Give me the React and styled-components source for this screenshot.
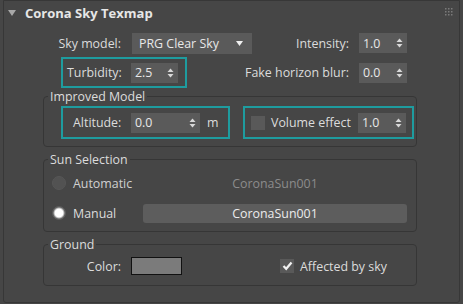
import React from 'react';
import styled, { createGlobalStyle } from 'styled-components';

const Global = createGlobalStyle`
  html, body {
    margin: 0;
    padding: 0;
    background: #464646;
  }
  body {
    font-family: "Open Sans", "Noto Sans", sans-serif;
    font-size: 12.4px;
    color: #dcdcdc;
  }
`

const Panel = styled.div`
  box-sizing: border-box;
  margin: 0 3px;
  height: 303px;
  border: 1px solid #373737;
  border-radius: 0 0 3px 3px;
  display: flex;
  flex-direction: column;
`

const Header = styled.div`
  height: 24px;
  display: flex;
  align-items: center;
  padding-left: 4px;
  position: relative;
`

const Title = styled.span`
  font-weight: 700;
  font-size: 13px;
  color: #e6e6e6;
  margin-left: 9px;
`

const Grip = styled.svg`
  position: absolute;
  right: 5px;
  top: 7px;
`

const Row = styled.div`
  display: flex;
  align-items: center;
  height: ${p => p.h || 22}px;
  margin-top: ${p => p.mt || 0}px;
`

const Left = styled.div`
  display: flex;
  align-items: center;
  flex: 1;
  min-width: 0;
`

const Right = styled.div`
  flex: none;
  display: flex;
  align-items: center;
  padding-right: 52px;
  gap: 10px;
  white-space: nowrap;
`

const Label = styled.span`
  display: inline-block;
  width: ${p => p.w}px;
  text-align: ${p => p.align || 'right'};
  white-space: nowrap;
  flex: none;
  margin-right: ${p => p.mr || 0}px;
  color: ${p => p.dim ? '#8c8c8c' : '#dcdcdc'};
`

const Highlight = styled.div`
  box-sizing: border-box;
  border: 2px solid #1e9c9f;
  display: flex;
  align-items: center;
  width: ${p => p.w}px;
  height: ${p => p.h}px;
  margin-left: ${p => p.ml || 0}px;
  padding-left: ${p => p.pl || 0}px;
  flex: none;
`

const Combo = styled.div`
  box-sizing: border-box;
  width: 120px;
  height: 21px;
  background: #5a5a5a;
  display: flex;
  align-items: center;
  justify-content: space-between;
  padding: 0 9px 0 7px;
  color: #e8e8e8;
  flex: none;
`

const SpinBox = styled.div`
  box-sizing: border-box;
  width: ${p => p.w || 48}px;
  height: 20px;
  background: #5a5a5a;
  display: flex;
  align-items: center;
  justify-content: space-between;
  padding: 0 4px 0 4px;
  color: #e8e8e8;
  flex: none;
`

const Group = styled.fieldset`
  margin: ${p => p.mt || 0}px 42px 0 39px;
  padding: 0 0 ${p => p.pb || 0}px 0;
  border: 1px solid #363636;
  border-radius: 4px;
  min-width: 0;
`

const Legend = styled.legend`
  padding: 0 2px;
  margin-left: 4px;
  line-height: 13px;
  color: #dcdcdc;
`

const Radio = styled.span`
  box-sizing: border-box;
  width: 14px;
  height: 14px;
  border-radius: 50%;
  flex: none;
  margin: 0 7px 0 8px;
  background: ${p => p.on
    ? 'radial-gradient(circle, #ffffff 0 4px, #d6d6d6 4.5px, #676767 6px)'
    : '#525252'};
  border: 1px solid ${p => p.on ? '#5e5e5e' : '#575757'};
`

const SunCell = styled.div`
  width: 264px;
  height: 19px;
  display: flex;
  align-items: center;
  justify-content: center;
  border-radius: 3px;
  background: ${p => p.button ? '#5d5d5d' : 'transparent'};
  color: ${p => p.button ? '#ececec' : '#8c8c8c'};
`

const RadioLabel = styled.div`
  width: 99px;
  display: flex;
  align-items: center;
  flex: none;
  color: ${p => p.dim ? '#d0d0d0' : '#dcdcdc'};
`

const Check = styled.span`
  box-sizing: border-box;
  width: 14px;
  height: 14px;
  background: #595959;
  flex: none;
  display: flex;
  align-items: center;
  justify-content: center;
  margin: 0 6px 0 ${p => p.ml || 0}px;
`

const Swatch = styled.span`
  box-sizing: border-box;
  width: 51px;
  height: 18px;
  border: 1px solid #111;
  background: #7b7b7b;
  flex: none;
`

const Unit = styled.span`
  margin-left: 7px;
`

const Arrows = () => (
  <svg width="7" height="10" viewBox="0 0 7 10">
    <path d="M3.5 0.5 L6.5 4 L0.5 4 Z" fill="#d8d8d8" />
    <path d="M0.5 6 L6.5 6 L3.5 9.5 Z" fill="#d8d8d8" />
  </svg>
)

const Spinner = ({ value, w }) => (
  <SpinBox w={w}>
    <span>{value}</span>
    <Arrows />
  </SpinBox>
)

const Tick = () => (
  <svg width="11" height="10" viewBox="0 0 11 10">
    <path d="M1.5 5 L4.2 7.8 L9.5 1.5" stroke="#f2f2f2" strokeWidth="2.2" fill="none" />
  </svg>
)

export default function App() {
  return (
    <>
      <Global />
      <Panel>
        <Header>
          <svg width="8" height="6" viewBox="0 0 8 6">
            <path d="M0 0 L8 0 L4 6 Z" fill="#a8a8a8" />
          </svg>
          <Title>Corona Sky Texmap</Title>
          <Grip width="9" height="9" viewBox="0 0 9 9">
            {[0, 3, 6].map(x => [0, 3, 6].map(y => (
              <rect key={x + '-' + y} x={x} y={y} width="1.5" height="1.5" fill="#7a7a7a" />
            )))}
          </Grip>
        </Header>

        <Row mt={7}>
          <Left>
            <Label w={117} mr={11}>Sky model:</Label>
            <Combo>
              <span>PRG Clear Sky</span>
              <svg width="7" height="5" viewBox="0 0 7 5">
                <path d="M0 0 L7 0 L3.5 5 Z" fill="#f0f0f0" />
              </svg>
            </Combo>
          </Left>
          <Right>
            <span>Intensity:</span>
            <Spinner value="1.0" />
          </Right>
        </Row>

        <Row mt={3} h={31}>
          <Left>
            <Highlight w={126} h={31} ml={57} pl={4}>
              <Label w={54} mr={10}>Turbidity:</Label>
              <Spinner value="2.5" w={47} />
            </Highlight>
          </Left>
          <Right>
            <span>Fake horizon blur:</span>
            <Spinner value="0.0" />
          </Right>
        </Row>

        <Group mt={2} pb={7}>
          <Legend>Improved Model</Legend>
          <Row h={33} mt={3}>
            <Highlight w={169} h={33} ml={17} pl={10}>
              <Label w={48} mr={10}>Altitude:</Label>
              <Spinner value="0.0" w={69} />
              <Unit>m</Unit>
            </Highlight>
            <Highlight w={171} h={33} ml={13} pl={6}>
              <Check />
              <Label w={87} align="left">Volume effect</Label>
              <Spinner value="1.0" />
            </Highlight>
          </Row>
        </Group>

        <Group mt={6} pb={8}>
          <Legend>Sun Selection</Legend>
          <Row h={20} mt={7}>
            <RadioLabel dim>
              <Radio />
              <span>Automatic</span>
            </RadioLabel>
            <SunCell>CoronaSun001</SunCell>
          </Row>
          <Row h={20} mt={10}>
            <RadioLabel>
              <Radio on />
              <span>Manual</span>
            </RadioLabel>
            <SunCell button>CoronaSun001</SunCell>
          </Row>
        </Group>

        <Group mt={6} pb={9}>
          <Legend>Ground</Legend>
          <Row h={20} mt={5}>
            <Label w={77} mr={10}>Color:</Label>
            <Swatch />
            <Check ml={98}><Tick /></Check>
            <span>Affected by sky</span>
          </Row>
        </Group>
      </Panel>
    </>
  );
}
